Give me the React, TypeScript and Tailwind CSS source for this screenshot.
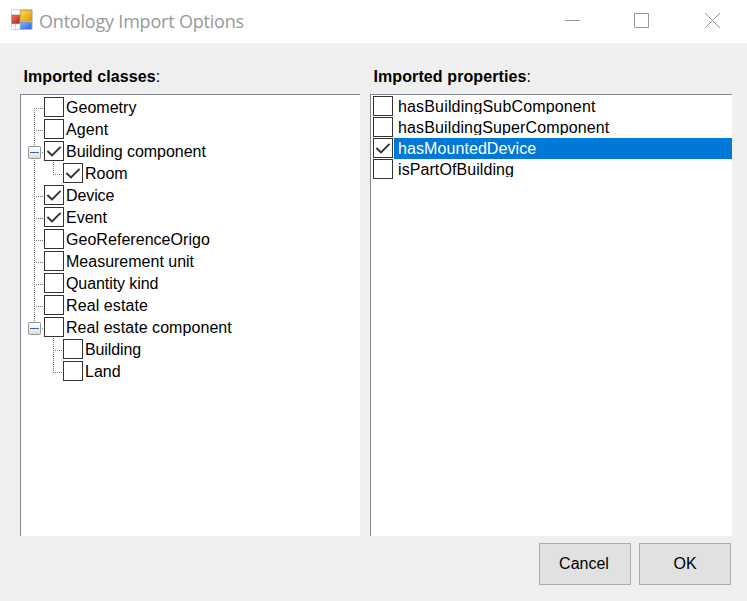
import React from "react";

type Branch = "first" | "middle" | "last" | "none";

interface ClassNode {
  label: string;
  tracking?: string;
  checked?: boolean;
  child?: boolean;
  expanded?: boolean;
  trunk: Branch;
  twig?: "middle" | "last";
}

const classes: ClassNode[] = [
  { label: "Geometry", trunk: "first", tracking: "tracking-[0.03px]" },
  { label: "Agent", trunk: "middle", tracking: "tracking-[0.1px]" },
  { label: "Building component", tracking: "tracking-[-0.04px]", checked: true, expanded: true, trunk: "middle" },
  { label: "Room", checked: true, child: true, trunk: "middle", twig: "last" },
  { label: "Device", tracking: "tracking-[-0.1px]", checked: true, trunk: "middle" },
  { label: "Event", checked: true, trunk: "middle" },
  { label: "GeoReferenceOrigo", tracking: "tracking-[0.04px]", trunk: "middle" },
  { label: "Measurement unit", trunk: "middle" },
  { label: "Quantity kind", tracking: "tracking-[-0.08px]", trunk: "middle" },
  { label: "Real estate", tracking: "tracking-[0.1px]", trunk: "middle" },
  { label: "Real estate component", tracking: "tracking-[0.06px]", expanded: true, trunk: "last" },
  { label: "Building", tracking: "tracking-[-0.12px]", child: true, trunk: "none", twig: "middle" },
  { label: "Land", child: true, trunk: "none", twig: "last" },
];

const properties = [
  { label: "hasBuildingSubComponent", tracking: "tracking-[0.16px]" },
  { label: "hasBuildingSuperComponent", tracking: "tracking-[0.13px]" },
  { label: "hasMountedDevice", tracking: "tracking-[0.08px]", selected: true },
  { label: "isPartOfBuilding", tracking: "tracking-[0.08px]" },
];

function CheckBox({ checked }: { checked?: boolean }) {
  return (
    <span className="block h-5 w-5 shrink-0 border border-[#333333] bg-white">
      {checked && (
        <svg viewBox="0 0 18 18" className="block h-[18px] w-[18px]" fill="none" stroke="#333" strokeWidth="1.9">
          <path d="M2.4 9 7 13.4 15.6 4.8" />
        </svg>
      )}
    </span>
  );
}

function Connectors({ node }: { node: ClassNode }) {
  const w = node.child ? 42 : 23;
  const top = node.trunk === "first" ? 12 : 0;
  const bottom = node.trunk === "last" ? 12 : 22;
  return (
    <svg width={w} height="22" viewBox={`0 0 ${w} 22`} className="block shrink-0">
      <defs>
        <linearGradient id="expander" x1="0" y1="0" x2="0" y2="1">
          <stop offset="0" stopColor="#fff" />
          <stop offset="0.5" stopColor="#f4f4f4" />
          <stop offset="1" stopColor="#d8d8d8" />
        </linearGradient>
      </defs>
      <g stroke="#777" strokeDasharray="1 1" shapeRendering="crispEdges">
        {node.trunk !== "none" && <path d={`M13.5 ${top}V${bottom}`} />}
        {!node.child && <path d="M13 12.5H22" />}
        {node.child && <path d={`M32.5 0V${node.twig === "last" ? 13 : 22}`} />}
        {node.child && <path d="M32 12.5H41" />}
      </g>
      {node.expanded && (
        <g>
          <rect x="7.5" y="6.5" width="12" height="12" rx="0.8" fill="url(#expander)" stroke="#989898" />
          <path d="M9 12.5H18" stroke="#3f5fae" />
        </g>
      )}
    </svg>
  );
}

function WindowIcon() {
  return (
    <svg width="22" height="22" viewBox="0 0 22 22" className="block">
      <defs>
        <linearGradient id="gold" x1="0" y1="0" x2="1" y2="1">
          <stop offset="0" stopColor="#ffdc5a" />
          <stop offset="1" stopColor="#d99800" />
        </linearGradient>
        <linearGradient id="red" x1="0" y1="0" x2="1" y2="1">
          <stop offset="0" stopColor="#ee7768" />
          <stop offset="1" stopColor="#b51c16" />
        </linearGradient>
        <linearGradient id="blue" x1="0" y1="0" x2="1" y2="1">
          <stop offset="0" stopColor="#83b4ff" />
          <stop offset="1" stopColor="#2d62d6" />
        </linearGradient>
      </defs>
      <rect x="0.5" y="0.5" width="21" height="20" rx="0.8" fill="#fff" stroke="#cfcfcf" />
      <path d="M4.5 15V20M9 1V20M1 5.5H9" stroke="#d4d4d4" />
      <rect x="1" y="6.5" width="7.5" height="8" fill="url(#red)" stroke="#b94a3c" strokeWidth="0.7" />
      <rect x="9.7" y="1.2" width="11" height="11" fill="url(#gold)" stroke="#c18c10" strokeWidth="0.7" />
      <rect x="9.7" y="13.2" width="11" height="6.8" fill="url(#blue)" stroke="#4b78c8" strokeWidth="0.5" />
    </svg>
  );
}

export default function App() {
  return (
    <div className="flex h-[601px] w-[747px] flex-col overflow-hidden bg-[#efefef] font-['Liberation_Sans',Arial,sans-serif] text-[16px] text-black">
      <header className="flex h-[43px] shrink-0 items-start bg-white text-[#999999]">
        <div className="ml-[11px] mt-[9px]">
          <WindowIcon />
        </div>
        <h1 className="ml-1.5 mt-[9px] whitespace-nowrap font-['Open_Sans','Noto_Sans',sans-serif] text-[18px] leading-[25px] tracking-[-0.2px]">
          Ontology Import Options
        </h1>
        <div className="ml-auto mr-[27px] mt-[12px] flex">
          <svg className="mr-[53px]" width="16" height="16" stroke="#999" fill="none"><path d="M0 8.5H15" /></svg>
          <svg className="mr-[54px]" width="16" height="16" stroke="#999" fill="none"><path d="M.5 1.5H14.5V15.5H.5Z" /></svg>
          <svg width="16" height="17" stroke="#999" fill="none"><path d="M1 1 16 16M16 1 1 16" /></svg>
        </div>
      </header>

      <main className="flex gap-2.5 pl-5 pt-[22px]">
        <section className="w-[340px]">
          <h2 className="h-[29px] whitespace-nowrap pl-[3.5px] font-bold leading-[24px] tracking-[0.1px]">
            Imported classes<span className="font-normal">:</span>
          </h2>
          <ul className="h-[442px] border-l border-t border-[#828790] bg-white pt-px">
            {classes.map((node) => (
              <li key={node.label} className="flex h-[22px] items-start">
                <Connectors node={node} />
                <div className="mt-px">
                  <CheckBox checked={node.checked} />
                </div>
                <span className={`ml-0.5 whitespace-nowrap leading-[24px] ${node.tracking ?? ""}`}>{node.label}</span>
              </li>
            ))}
          </ul>
        </section>

        <section className="w-[362px]">
          <h2 className="h-[29px] whitespace-nowrap pl-[3.5px] font-bold leading-[24px] tracking-[0.1px]">
            Imported properties<span className="font-normal">:</span>
          </h2>
          <ul className="h-[442px] border-l border-t border-[#828790] bg-white pl-0.5 pt-px">
            {properties.map((item) => (
              <li key={item.label} className="flex h-[21px]">
                <CheckBox checked={item.selected} />
                <div className={`ml-px h-[21px] grow pl-1 ${item.selected ? "bg-[#0078d7] text-white" : ""}`}>
                  <span className={`block h-[18px] overflow-hidden whitespace-nowrap leading-[21px] ${item.tracking}`}>
                    {item.label}
                  </span>
                </div>
              </li>
            ))}
          </ul>
        </section>
      </main>

      <footer className="mt-[7px] flex justify-end gap-2 pr-4">
        <button className="h-[42px] w-[92px] border border-[#adadad] bg-[#e1e1e1] pb-px pr-[2px]">Cancel</button>
        <button className="h-[42px] w-[92px] border border-[#adadad] bg-[#e1e1e1] pb-px">OK</button>
      </footer>
    </div>
  );
}
